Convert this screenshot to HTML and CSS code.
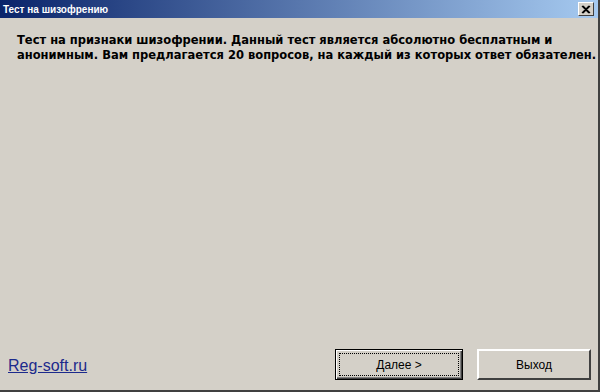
FILE: index.html
```html
<!DOCTYPE html>
<html>
<head>
<meta charset="utf-8">
<link rel="stylesheet" href="styles.css">
</head>
<body>
<div class="window">
  <div class="titlebar">
    <span class="title">Тест на шизофрению</span>
    <span class="close">
      <svg width="10" height="9" viewBox="0 0 10 9"><path d="M1 1 L8 8 M2 1 L9 8 M8 1 L1 8 M9 1 L2 8" stroke="#000" stroke-width="1.2" fill="none"/></svg>
    </span>
  </div>
  <div class="content">
    <p class="intro">Тест на признаки шизофрении. Данный тест является абсолютно бесплатным и<br>анонимным. Вам предлагается 20 вопросов, на каждый из которых ответ обязателен.</p>
    <div class="footer">
      <a class="link" href="#">Reg-soft.ru</a>
      <div class="buttons">
        <button class="btn default"><span class="focus">Далее &gt;</span></button>
        <button class="btn">Выход</button>
      </div>
    </div>
  </div>
</div>
</body>
</html>
```
FILE: styles.css
```css
html, body { margin: 0; padding: 0; }
body { width: 600px; height: 392px; background: #d4d0c8; overflow: hidden; font-family: "DejaVu Sans", Verdana, sans-serif; }
.window { width: 600px; height: 392px; box-sizing: border-box; border-right: 2px solid #404040; border-bottom: 2px solid #404040; display: flex; flex-direction: column; background: #d4d0c8; }
.titlebar { height: 18px; background: linear-gradient(to right, #0a246a, #a6caf0); display: flex; align-items: center; justify-content: space-between; padding: 0 4px 0 3px; }
.title { color: #fff; font-family: "Liberation Sans", Arial, sans-serif; font-weight: bold; font-size: 10px; }
.close { width: 16px; height: 14px; box-sizing: border-box; background: #d4d0c8; border: 1px solid; border-color: #fff #404040 #404040 #fff; display: flex; align-items: center; justify-content: center; }
.content { flex: 1; display: flex; flex-direction: column; padding: 0 8px 0 8px; }
.intro { margin: 15px 0 0 9px; font-size: 11.5px; font-weight: bold; line-height: 15px; color: #000; white-space: nowrap; }
.footer { margin-top: auto; display: flex; align-items: center; justify-content: space-between; padding-bottom: 10px; }
.link { font-family: "Liberation Sans", Arial, sans-serif; font-size: 16px; color: #1c2a8c; text-decoration: underline; margin-top: 2px; }
.buttons { display: flex; gap: 14px; margin-right: -1px; }
.btn { width: 114px; height: 31px; box-sizing: border-box; background: #d4d0c8; border: 2px solid; border-color: #fff #404040 #404040 #fff; font-family: "Liberation Sans", Arial, sans-serif; font-size: 12px; color: #000; padding: 0; }
.btn.default { width: 128px; border: 1px solid #000; box-shadow: inset 1px 1px 0 #fff, inset -1px -1px 0 #404040, inset -2px -2px 0 #808080; padding: 3px; }
.focus { display: flex; height: 100%; align-items: center; justify-content: center; outline: 1px dotted #000; outline-offset: -1px; }
```
